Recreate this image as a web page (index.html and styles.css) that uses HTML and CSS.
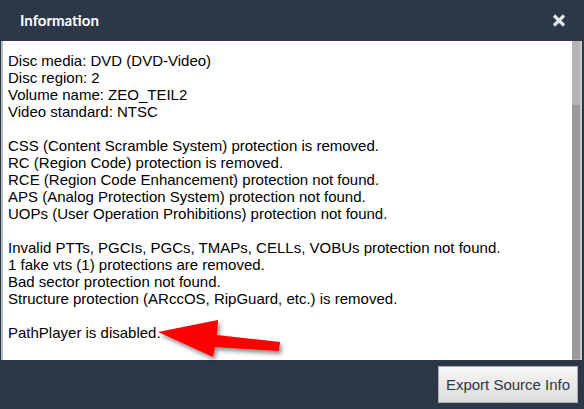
FILE: index.html
```html
<!DOCTYPE html>
<html>
<head>
<meta charset="utf-8">
<link rel="stylesheet" href="styles.css">
</head>
<body>
<div class="dialog">
  <div class="titlebar">
    <span class="title">Information</span>
    <svg class="close" width="14" height="13" viewBox="0 0 14 13"><path d="M2 1.5 L12 11.5 M12 1.5 L2 11.5" stroke="#dfe5ec" stroke-width="3.2" stroke-linecap="butt"/></svg>
  </div>
  <div class="panel">
    <div class="text">
      <p>Disc media: DVD (DVD-Video)<br>Disc region: 2<br>Volume name: ZEO_TEIL2<br>Video standard: NTSC</p>
      <p>CSS (Content Scramble System) protection is removed.<br>RC (Region Code) protection is removed.<br>RCE (Region Code Enhancement) protection not found.<br>APS (Analog Protection System) protection not found.<br>UOPs (User Operation Prohibitions) protection not found.</p>
      <p>Invalid PTTs, PGCIs, PGCs, TMAPs, CELLs, VOBUs protection not found.<br>1 fake vts (1) protections are removed.<br>Bad sector protection not found.<br>Structure protection (ARccOS, RipGuard, etc.) is removed.</p>
      <p>PathPlayer is disabled.</p>
    </div>
    <div class="scrollbar"><div class="thumb"></div></div>
  </div>
  <div class="footer">
    <button class="btn">Export Source Info</button>
  </div>
  <svg class="arrow" width="584" height="409" viewBox="0 0 584 409">
    <defs>
      <filter id="sh" x="-20%" y="-30%" width="140%" height="160%">
        <feDropShadow dx="2" dy="3" stdDeviation="2" flood-color="#000" flood-opacity="0.45"/>
      </filter>
    </defs>
    <polygon points="158,332 218,320 217,335 280,342 279,351 215,347 213,357" fill="#ff0000" filter="url(#sh)"/>
  </svg>
</div>
</body>
</html>
```
FILE: styles.css
```css
html, body {
  margin: 0;
  padding: 0;
  background: #2c3747;
}
.dialog {
  position: relative;
  width: 584px;
  height: 409px;
  display: flex;
  flex-direction: column;
  background: #2c3747;
  overflow: hidden;
}
.titlebar {
  height: 41px;
  flex: none;
  display: flex;
  align-items: center;
  justify-content: space-between;
  padding: 0 18px 0 20px;
  box-sizing: border-box;
}
.title {
  color: #ffffff;
  font-family: Lato, "Open Sans", sans-serif;
  font-weight: 700;
  font-size: 15px;
  letter-spacing: 0;
  position: relative;
  top: -1px;
}
.close {
  display: block;
  margin-top: -1px;
}
.panel {
  flex: none;
  height: 319px;
  margin: 0 2px 0 1px;
  display: flex;
  background: #ffffff;
  border-left: 2px solid #b8bcc2;
}
.text {
  flex: 1;
  padding: 11px 0 0 5px;
  font-family: "Liberation Sans", Arial, sans-serif;
  font-size: 15px;
  line-height: 17px;
  color: #000000;
  overflow: hidden;
  white-space: nowrap;
}
.text p {
  margin: 0 0 17px 0;
}
.scrollbar {
  width: 8px;
  flex: none;
  background: #b5b5b5;
  border-right: 2px solid #c9c9c9;
  display: flex;
  flex-direction: column;
  justify-content: flex-end;
}
.thumb {
  height: 254px;
  margin-bottom: 1px;
  background: #9a9a9a;
}
.footer {
  flex: 1;
  display: flex;
  justify-content: flex-end;
  align-items: flex-start;
  padding: 6px 6px 0 0;
}
.btn {
  width: 140px;
  height: 37px;
  border: 1px solid #adadad;
  background: linear-gradient(#f7f7f7, #dcdcdc);
  color: #2c3747;
  font-family: "Liberation Sans", Arial, sans-serif;
  font-size: 15px;
  padding: 0;
  margin: 0;
}
.arrow {
  position: absolute;
  left: 0;
  top: 0;
  pointer-events: none;
}
```
